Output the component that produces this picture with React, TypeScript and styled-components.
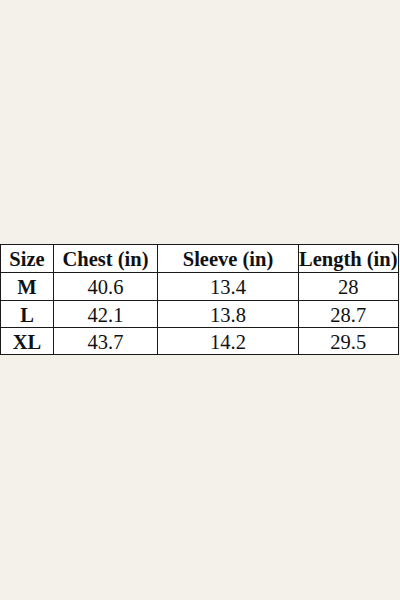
import styled, { createGlobalStyle } from "styled-components";

type Row = {
  size: string;
  chest: string;
  sleeve: string;
  length: string;
  h: number;
};

const rows: Row[] = [
  { size: "M", chest: "40.6", sleeve: "13.4", length: "28", h: 27 },
  { size: "L", chest: "42.1", sleeve: "13.8", length: "28.7", h: 26 },
  { size: "XL", chest: "43.7", sleeve: "14.2", length: "29.5", h: 26 },
];

const GlobalStyle = createGlobalStyle`
  html, body {
    margin: 0;
    padding: 0;
    background: #f4f1ea;
  }
`;

const Page = styled.div`
  width: 400px;
  height: 600px;
  display: flex;
  align-items: center;
`;

const Table = styled.table`
  border-collapse: collapse;
  background: #fff;
  font-family: "Liberation Serif", "Times New Roman", serif;
  font-size: 20.5px;
  color: #111;
  margin-bottom: 1px;
`;

const Cell = styled.td<{ $w: number; $h: number; $bold?: boolean }>`
  width: ${({ $w }) => $w}px;
  height: ${({ $h }) => $h - 2}px;
  line-height: ${({ $h }) => $h - 2}px;
  padding: 2px 0 0;
  border: 1px solid #1a1a1a;
  text-align: center;
  font-weight: ${({ $bold }) => ($bold ? 700 : 400)};
  white-space: nowrap;
`;

const widths = [52, 103, 140, 98];

export default function App() {
  return (
    <>
      <GlobalStyle />
      <Page>
        <Table>
          <tbody>
            <tr>
              {["Size", "Chest (in)", "Sleeve (in)", "Length (in)"].map((h, i) => (
                <Cell key={h} $w={widths[i]} $h={27} $bold>
                  {h}
                </Cell>
              ))}
            </tr>
            {rows.map((r) => (
              <tr key={r.size}>
                <Cell $w={widths[0]} $h={r.h} $bold>
                  {r.size}
                </Cell>
                <Cell $w={widths[1]} $h={r.h}>{r.chest}</Cell>
                <Cell $w={widths[2]} $h={r.h}>{r.sleeve}</Cell>
                <Cell $w={widths[3]} $h={r.h}>{r.length}</Cell>
              </tr>
            ))}
          </tbody>
        </Table>
      </Page>
    </>
  );
}
